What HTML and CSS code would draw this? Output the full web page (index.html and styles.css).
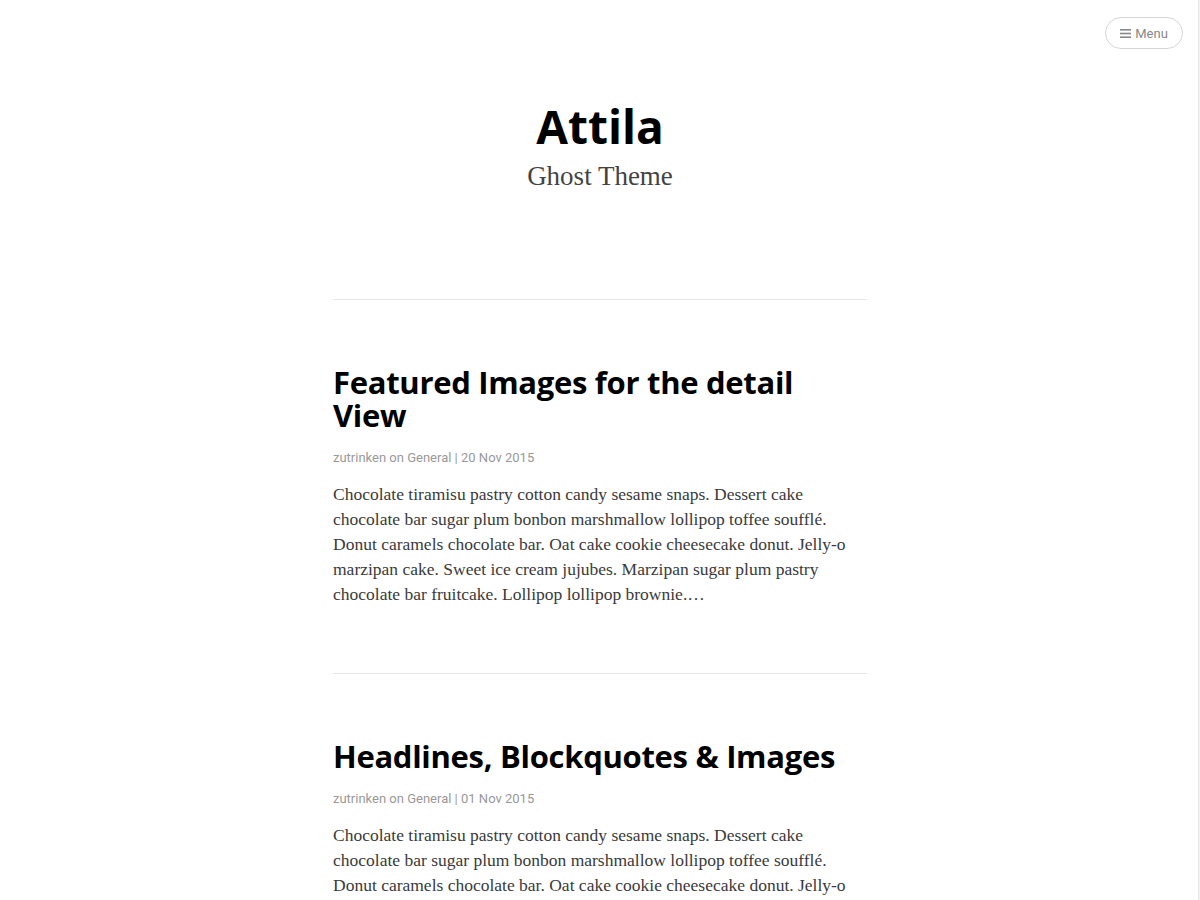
FILE: index.html
```html
<!DOCTYPE html>
<html lang="en">
<head>
<meta charset="utf-8">
<title>Attila</title>
<link rel="stylesheet" href="styles.css">
</head>
<body>
<aside class="nav-panel"></aside>
<button class="menu-button" type="button">
  <svg class="menu-icon" width="11" height="9" viewBox="0 0 11 9" aria-hidden="true">
    <rect x="0" y="0" width="11" height="1.6"/>
    <rect x="0" y="3.7" width="11" height="1.6"/>
    <rect x="0" y="7.4" width="11" height="1.6"/>
  </svg>
  <span>Menu</span>
</button>

<header class="site-header">
  <h1 class="site-title">Attila</h1>
  <p class="site-description">Ghost Theme</p>
</header>

<main class="content">
  <article class="post">
    <h2 class="post-title">Featured Images for the detail View</h2>
    <div class="post-meta">zutrinken on General | 20 Nov 2015</div>
    <p class="post-excerpt">Chocolate tiramisu pastry cotton candy sesame snaps. Dessert cake chocolate bar sugar plum bonbon marshmallow lollipop toffee soufflé. Donut caramels chocolate bar. Oat cake cookie cheesecake donut. Jelly-o marzipan cake. Sweet ice cream jujubes. Marzipan sugar plum pastry chocolate bar fruitcake. Lollipop lollipop brownie.…</p>
  </article>
  <article class="post">
    <h2 class="post-title">Headlines, Blockquotes &amp; Images</h2>
    <div class="post-meta">zutrinken on General | 01 Nov 2015</div>
    <p class="post-excerpt">Chocolate tiramisu pastry cotton candy sesame snaps. Dessert cake chocolate bar sugar plum bonbon marshmallow lollipop toffee soufflé. Donut caramels chocolate bar. Oat cake cookie cheesecake donut. Jelly-o marzipan cake. Sweet ice cream jujubes. Marzipan sugar plum pastry chocolate bar fruitcake. Lollipop lollipop brownie.…</p>
  </article>
</main>
</body>
</html>
```
FILE: styles.css
```css
html, body {
  margin: 0;
  padding: 0;
  background: #fff;
}
body {
  font-family: "Liberation Serif", serif;
  color: #333;
}
.nav-panel {
  position: fixed;
  top: 0;
  right: 0;
  bottom: 0;
  width: 1px;
  border-left: 1px solid #e8e8e8;
  background: #f2f2f2;
}
.menu-button {
  position: fixed;
  top: 17px;
  right: 17px;
  width: 78px;
  height: 32px;
  border: 1px solid #d5d5d5;
  border-radius: 16px;
  background: #fff;
  color: #888;
  font-family: Roboto, sans-serif;
  font-size: 13px;
  display: flex;
  align-items: center;
  justify-content: center;
  gap: 4px;
  padding: 0;
}
.menu-icon { fill: #888; }

.site-header {
  text-align: center;
  padding-top: 96px;
  padding-bottom: 105px;
}
.site-title {
  margin: 0;
  font-family: "Open Sans", sans-serif;
  font-weight: 700;
  font-size: 46px;
  line-height: 60px;
  color: #000;
}
.site-description {
  margin: 2px 0 0;
  font-size: 27px;
  line-height: 36px;
  color: #444;
}

.content {
  width: 534px;
  margin: 0 auto;
}
.post {
  border-top: 1px solid #e6e6e6;
  padding: 66px 0 66px;
}
.post-title {
  margin: 0;
  font-family: "Open Sans", sans-serif;
  font-weight: 700;
  font-size: 31px;
  line-height: 33px;
  color: #000;
  letter-spacing: -0.3px;
}
.post-meta {
  margin-top: 16px;
  font-family: Roboto, sans-serif;
  font-size: 13px;
  line-height: 20px;
  color: #999;
}
.post-excerpt {
  margin: 14px 0 0;
  font-size: 17.5px;
  line-height: 25px;
  color: #3a3a3a;
}
```
